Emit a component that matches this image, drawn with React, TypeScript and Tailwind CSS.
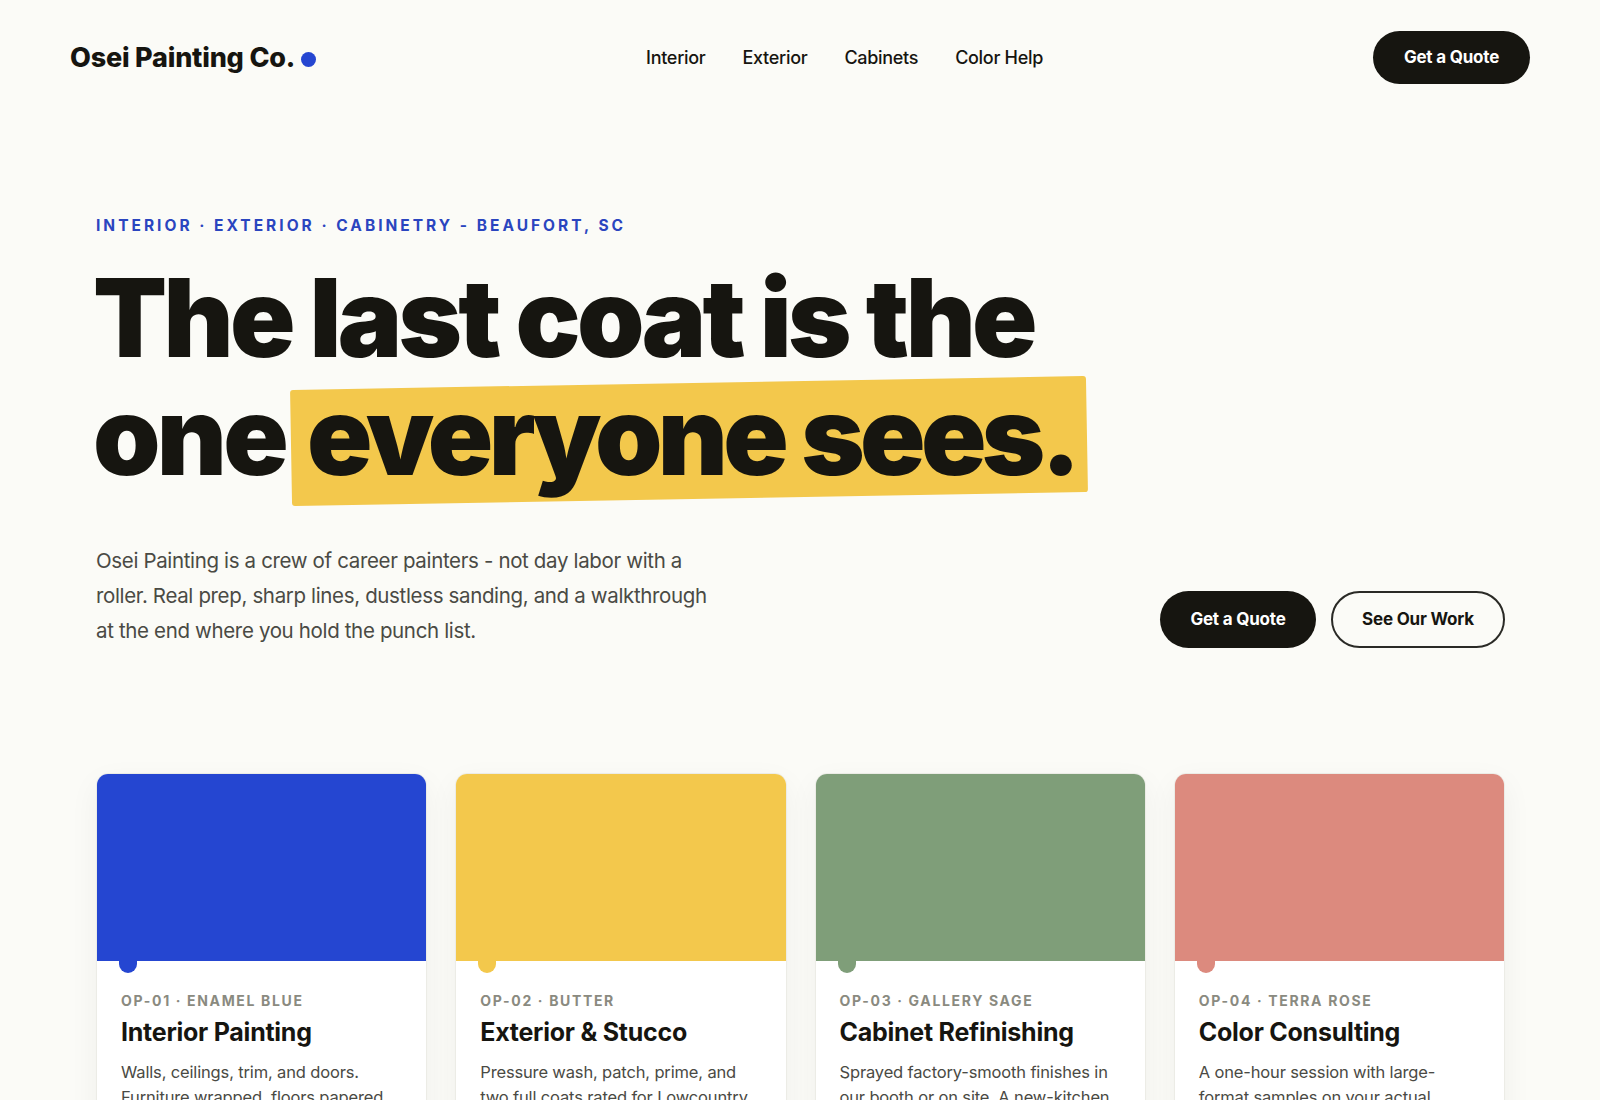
const nav = ["Interior", "Exterior", "Cabinets", "Color Help"];

const services = [
  {
    code: "OP-01 · ENAMEL BLUE",
    title: "Interior Painting",
    body: "Walls, ceilings, trim, and doors. Furniture wrapped, floors papered, and every room put back.",
    swatch: "bg-[#2546d1]",
  },
  {
    code: "OP-02 · BUTTER",
    title: "Exterior & Stucco",
    body: "Pressure wash, patch, prime, and two full coats rated for Lowcountry sun and salt air.",
    swatch: "bg-[#f3c84c]",
  },
  {
    code: "OP-03 · GALLERY SAGE",
    title: "Cabinet Refinishing",
    body: "Sprayed factory-smooth finishes in our booth or on site. A new-kitchen look for less.",
    swatch: "bg-[#7f9e79]",
  },
  {
    code: "OP-04 · TERRA ROSE",
    title: "Color Consulting",
    body: "A one-hour session with large-format samples on your actual",
    swatch: "bg-[#dc8a7e]",
  },
];

export default function App() {
  return (
    <div className="h-screen overflow-hidden bg-[#fbfbf7] font-['Inter',sans-serif] text-[#161510]">
      <header className="flex items-center justify-between px-[70px] pt-[31px]">
        <div className="mt-[1px] flex items-center gap-[6px]">
          <span className="text-[27px] font-extrabold tracking-[-0.2px]">Osei Painting Co.</span>
          <span className="mt-[3px] h-[15px] w-[15px] rounded-full bg-[#2546d1]" />
        </div>
        <nav className="flex items-center gap-[37px] text-[18px] font-medium tracking-[-0.3px]">
          {nav.map((item) => (
            <a key={item}>{item}</a>
          ))}
        </nav>
        <button className="h-[53px] w-[157px] rounded-full bg-[#161510] text-[17px] font-bold tracking-[-0.2px] text-white">
          Get a Quote
        </button>
      </header>

      <main className="pl-[96px] pr-[95px] pt-[132px]">
        <p className="text-[15.5px] font-bold leading-[20px] tracking-[3px] text-[#2a45bf]">
          INTERIOR · EXTERIOR · CABINETRY - BEAUFORT, SC
        </p>
        <h1 className="mt-[23px] -ml-[3px] text-[108px] font-black leading-[118px] tracking-[-3.7px]">
          The last coat is the
          <br />
          one{" "}
          <span className="relative -ml-[12px] inline-block pl-[16px] pr-[10px]">
            <span className="absolute inset-x-0 bottom-[-4px] top-[6px] -rotate-1 rounded-[3px] bg-[#f3c84c]" />
            <span className="relative tracking-[-4.6px]">everyone sees.</span>
          </span>
        </h1>

        <div className="mt-[48px] flex items-end justify-between">
          <p className="w-[625px] text-[20.5px] leading-[35px] tracking-[-0.35px] text-[#4a4a44]">
            Osei Painting is a crew of career painters - not day labor with a roller. Real prep, sharp
            lines, dustless sanding, and a walkthrough at the end where you hold the punch list.
          </p>
          <div className="flex gap-[15px]">
            <button className="h-[57px] w-[156px] rounded-full bg-[#161510] text-[17px] font-bold tracking-[-0.2px] text-white">
              Get a Quote
            </button>
            <button className="h-[57px] w-[174px] rounded-full border-2 border-[#2a2a26] text-[17px] font-bold tracking-[-0.2px]">
              See Our Work
            </button>
          </div>
        </div>

        <section className="mt-[125px] grid grid-cols-4 gap-[28px]">
          {services.map((s) => (
            <article
              key={s.code}
              className="overflow-hidden rounded-[12px] border border-[#ecece6] bg-white shadow-[0_10px_30px_rgba(22,21,16,0.05)]"
            >
              <div className={`relative h-[187px] ${s.swatch}`}>
                <span className={`absolute left-[22px] top-[177px] h-[22px] w-[18px] rounded-b-full ${s.swatch}`} />
              </div>
              <div className="px-[24px] pt-[31px]">
                <p className="text-[14px] font-bold leading-[18px] tracking-[1.65px] text-[#8a8a80]">{s.code}</p>
                <h3 className="mt-[6px] text-[25px] font-bold leading-[32px] tracking-[-0.25px]">{s.title}</h3>
                <p className="mt-[12px] text-[16.5px] leading-[25px] tracking-[-0.15px] text-[#4a4a44]">{s.body}</p>
              </div>
            </article>
          ))}
        </section>
      </main>
    </div>
  );
}
